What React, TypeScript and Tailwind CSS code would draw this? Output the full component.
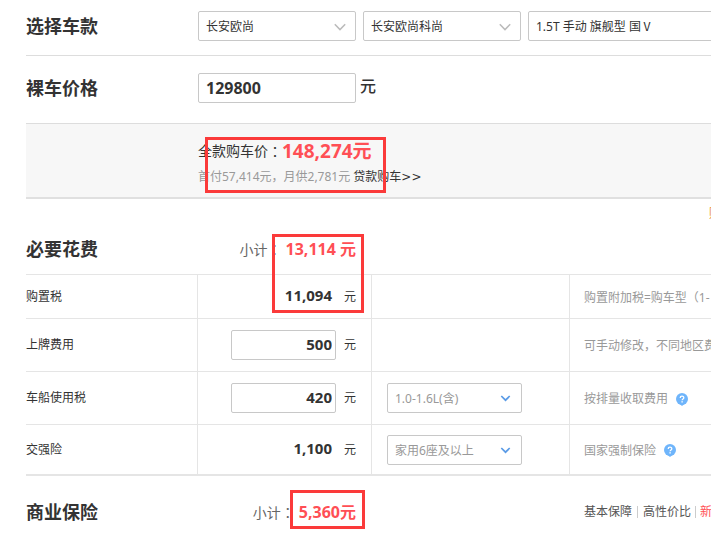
import React, { useState } from 'react';
import { clsx } from 'clsx';

interface PickerProps {
  label: string;
  options: string[];
  className?: string;
  tone?: 'gray' | 'blue';
}

const Picker: React.FC<PickerProps> = ({ label, options, className, tone = 'gray' }) => (
  <div className={clsx('relative h-[30px]', className)}>
    <select
      aria-label={label}
      className={clsx(
        'block w-full h-full pt-0.5 pl-[7px] pr-7 appearance-none rounded-xs border border-[#c8c8c8] bg-white text-xs outline-none focus:border-blue-400',
        tone === 'gray' ? 'text-[#333]' : 'text-[#999]'
      )}
    >
      {options.map(o => <option key={o}>{o}</option>)}
    </select>
    <svg
      viewBox="0 0 12 8"
      className={clsx('pointer-events-none absolute right-2.5 top-3 w-3 h-2', tone === 'gray' ? 'text-[#bbb]' : 'text-[#5a9be6]')}
      fill="none"
      stroke="currentColor"
      strokeWidth={tone === 'gray' ? 1.5 : 1.7}
    >
      <path d={tone === 'gray' ? 'M0.8 1.2 L6 6.6 L11.2 1.2' : 'M1.3 1 L5.5 5.2 L9.7 1'} />
    </svg>
  </div>
);

const HelpIcon = () => (
  <svg viewBox="0 0 12 13" className="w-3 h-[13px] shrink-0" aria-hidden="true">
    <circle cx="6" cy="6" r="6" fill="#6fb5fb" />
    <path d="M3 10.6 L6 13 L9 10.6 Z" fill="#6fb5fb" />
    <path d="M4.2 4.9 C4.2 2.6 7.8 2.6 7.8 4.8 C7.8 6 6.1 6 6.1 7.3" fill="none" stroke="#fff" strokeWidth="1.3" />
    <rect x="5.4" y="8.2" width="1.4" height="1.3" fill="#fff" />
  </svg>
);

// the TC face centres the colon in the em box
const Colon = () => (
  <span className="font-['Noto_Sans_CJK_TC',sans-serif]" lang="zh-Hant">：</span>
);

interface CostRow {
  id: string;
  name: string;
  amount: string;
  editable?: boolean;
  options?: string[];
  note: string;
  help?: boolean;
  height: string;
}

const costRows: CostRow[] = [
  { id: 'purchase', name: '购置税', amount: '11,094', note: '购置附加税=购车型（1-', height: 'h-11' },
  { id: 'plate', name: '上牌费用', amount: '500', editable: true, note: '可手动修改，不同地区费', height: 'h-[53px]' },
  { id: 'vessel', name: '车船使用税', amount: '420', editable: true, options: ['1.0-1.6L(含)'], note: '按排量收取费用', help: true, height: 'h-[53px]' },
  { id: 'compulsory', name: '交强险', amount: '1,100', options: ['家用6座及以上'], note: '国家强制保险', help: true, height: 'h-[51px]' },
];

const Subtotal = ({ children }: { children: React.ReactNode }) => (
  <p className="w-[174px] h-6 shrink-0 pr-4 text-right text-sm leading-6 text-[#666]">
    小计<Colon />
    <strong className="ml-1 text-base leading-6 text-[#ff4f55]">{children}</strong>
  </p>
);

const titleClass = 'w-[172px] shrink-0 text-lg leading-6 font-bold text-[#333]';

export default function App() {
  const [price, setPrice] = useState('129800');

  return (
    <main className="relative overflow-hidden bg-white pl-[26px] font-['Noto_Sans','Noto_Sans_CJK_SC',sans-serif] text-xs text-[#333] whitespace-nowrap">
      <section className="flex items-center border-b border-[#ddd] pt-[11px] pb-3.5">
        <h2 className={titleClass}>选择车款</h2>
        <div className="flex gap-[7px]">
          <Picker label="品牌" options={['长安欧尚']} className="w-[158px] shrink-0" />
          <Picker label="车系" options={['长安欧尚科尚']} className="w-[158px] shrink-0" />
          <Picker label="车型" options={['1.5T 手动 旗舰型 国Ⅴ']} className="w-[240px] shrink-0" />
        </div>
      </section>

      <section className="flex items-center border-b border-[#ddd] pt-[17px] pb-5">
        <h2 className={titleClass}><label htmlFor="price">裸车价格</label></h2>
        <input
          id="price"
          value={price}
          onChange={e => setPrice(e.target.value)}
          className="w-[158px] h-[30px] px-[7px] rounded-xs border border-[#c8c8c8] text-base font-bold outline-none focus:border-blue-400"
        />
        <span className="ml-1 pb-1 text-base leading-6 font-medium">元</span>
      </section>

      <section className="border-b-2 border-[#e0e0e0] bg-[#f7f7f7] pt-3 pb-[9px] pl-[172px]">
        <div className="relative">
          <p className="flex items-center h-[30px] text-sm">
            全款购车价<Colon /><strong className="text-[19px] leading-7 text-[#ff4f55]">148,274元</strong>
          </p>
          <p className="h-[22px] leading-[22px] text-[#999]">
            首付57,414元，月供2,781元{' '}
            <a href="#loan" className="text-[#333]">贷款购车<span className="font-['DejaVu_Sans',sans-serif]">&gt;&gt;</span></a>
          </p>
          <div className="pointer-events-none absolute left-[7px] top-px w-[181px] h-14 border-3 border-[#fb3a3a]" />
        </div>
      </section>

      <div className="flex h-[30px] items-center pl-[683px]">
        <a href="#guide" className="text-[#e58a2e]">购车</a>
      </div>

      <section className="relative">
        <header className="flex items-center h-10 mb-[5px]">
          <h2 className={titleClass}>必要花费</h2>
          <Subtotal>13,114 元</Subtotal>
        </header>
        <table className="w-full table-fixed border-separate border-spacing-0 border-t border-[#e5e5e5] text-left">
          <colgroup>
            <col className="w-[172px]" />
            <col className="w-[174px]" />
            <col className="w-[198px]" />
            <col />
          </colgroup>
          <tbody className="[&_th]:border-b [&_td]:border-b [&_th]:border-[#e5e5e5] [&_td]:border-[#e5e5e5] [&>tr:last-child>*]:border-b-2">
            {costRows.map(row => (
              <tr key={row.id} className={row.height}>
                <th scope="row" className="border-r font-normal">
                  {row.editable ? <label htmlFor={row.id}>{row.name}</label> : row.name}
                </th>
                <td className="border-r pr-[15px]">
                  <div className="flex items-center justify-end gap-2">
                    {row.editable ? (
                      <input
                        id={row.id}
                        defaultValue={row.amount}
                        className="w-[105px] h-[30px] px-[3px] pb-0.5 rounded-xs border border-[#c8c8c8] text-right text-[15px] font-bold outline-none focus:border-blue-400"
                      />
                    ) : (
                      <strong className="pr-1 pb-1 text-[15px] leading-6">{row.amount}</strong>
                    )}
                    <span>元</span>
                  </div>
                </td>
                <td className="border-r pl-[15px]">
                  {row.options && <Picker label={row.name} options={row.options} className="w-[135px]" tone="blue" />}
                </td>
                <td className="overflow-hidden pt-0.5 pl-3.5 text-[#999]">
                  <div className="flex items-center gap-2">
                    {row.note}
                    {row.help && <button type="button" aria-label={row.name + '说明'}><HelpIcon /></button>}
                  </div>
                </td>
              </tr>
            ))}
          </tbody>
        </table>
        <div className="pointer-events-none absolute left-[246px] top-[5px] w-[92px] h-[79px] border-3 border-[#fb3a3a]" />
      </section>

      <section className="relative pt-4">
        <header className="flex items-center h-10">
          <h2 className={titleClass}>商业保险</h2>
          <Subtotal>5,360元</Subtotal>
          <nav className="flex shrink-0 items-center gap-1 pl-[212px] text-[#555]">
            <a href="#basic">基本保障</a>
            <span className="w-px h-3 mx-px bg-[#ccc]" />
            <a href="#value">高性价比</a>
            <span className="w-px h-3 bg-[#ccc]" />
            <a href="#new" className="text-[#ff4f55]">新</a>
          </nav>
        </header>
        <div className="pointer-events-none absolute left-[264px] top-3.5 w-[75px] h-[39px] border-3 border-[#fb3a3a]" />
      </section>
    </main>
  );
}
